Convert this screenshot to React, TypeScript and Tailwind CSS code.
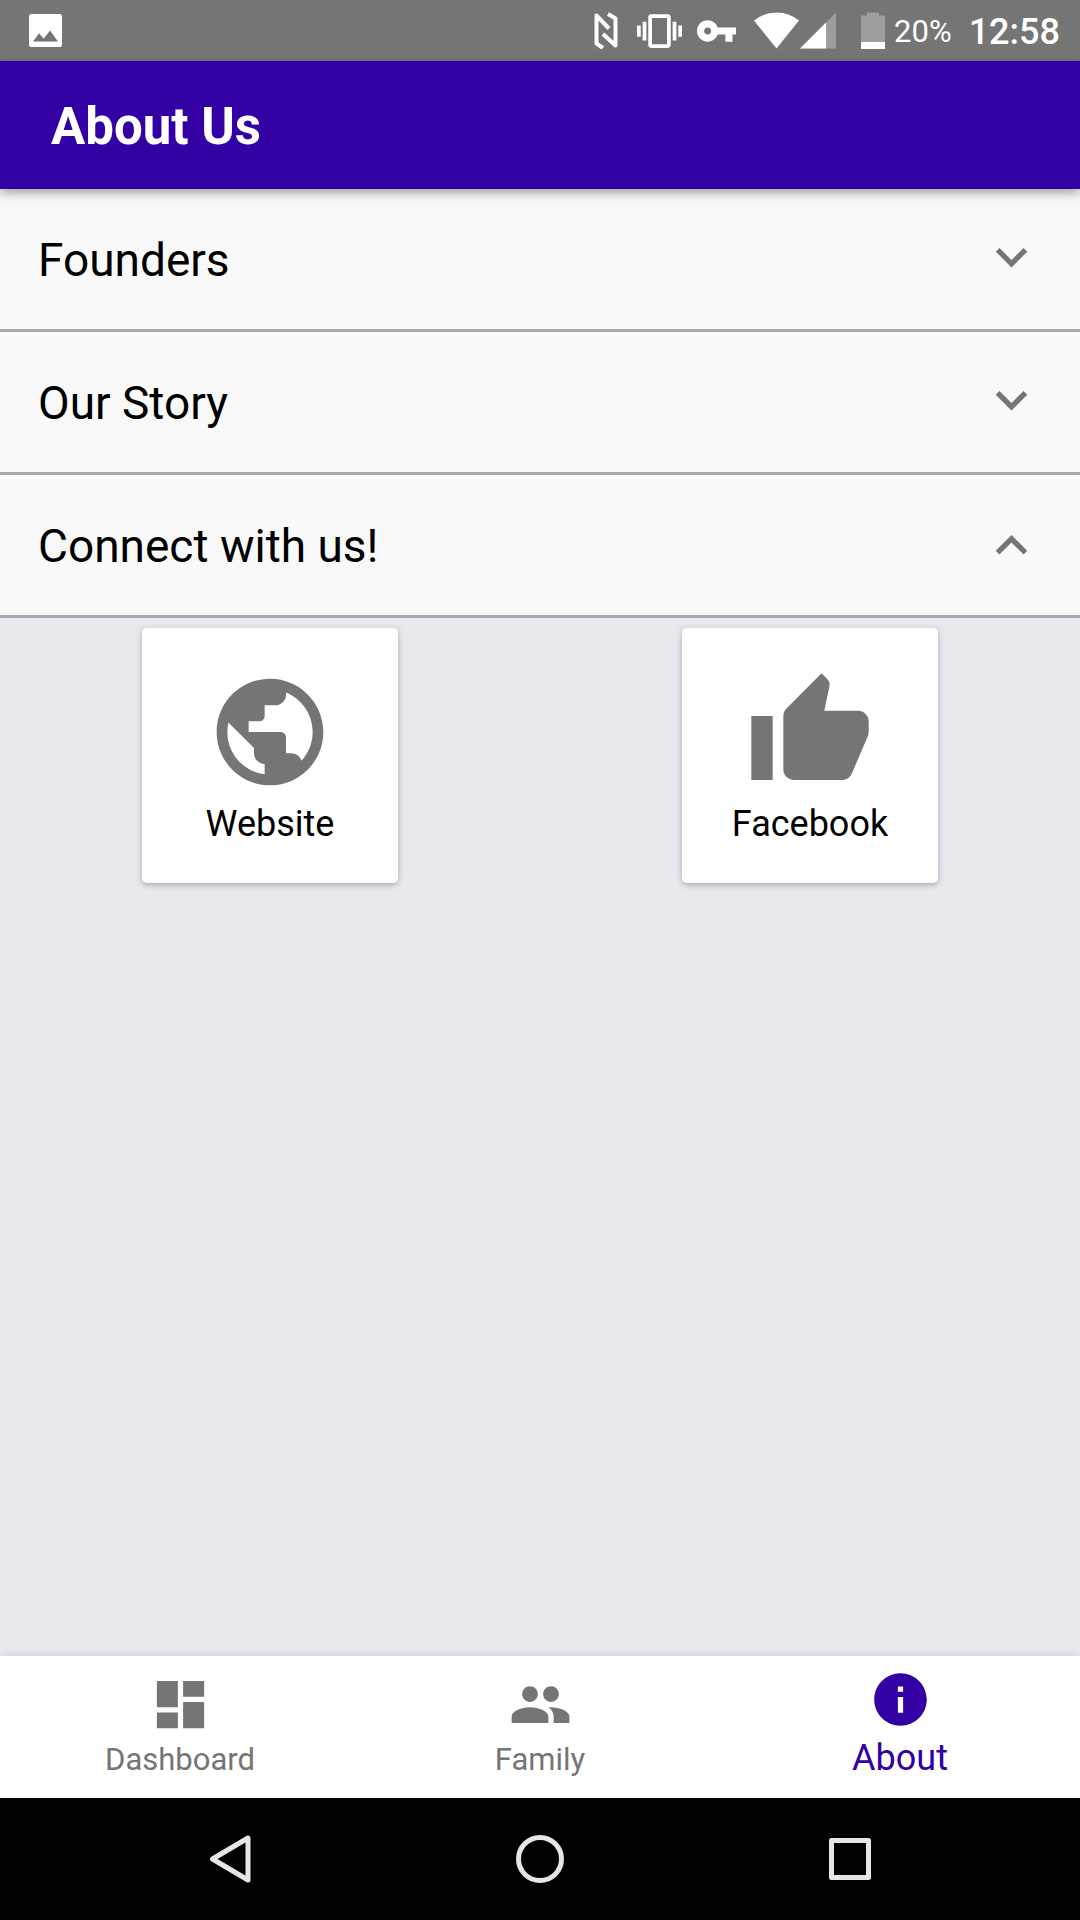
import { useState } from "react";
import type { ReactNode } from "react";

function StatusBar() {
  return (
    <div className="flex h-[61px] items-center justify-between bg-[#757575] pr-[20px] pl-[29px] text-white">
      <svg viewBox="0 0 18 18" className="size-[33px] fill-white" aria-label="Picture notification">
        <path
          fillRule="evenodd"
          d="M1.4 0h15.2Q18 0 18 1.4v15.2q0 1.4-1.4 1.4H1.4Q0 18 0 16.6V1.4Q0 0 1.4 0zM5.5 10.5L2.2 15h13.6L11.5 9 8 13.5z"
        />
      </svg>
      <div className="flex items-center">
        <svg
          viewBox="0 0 24 37"
          className="mr-[19px] h-[37px] w-[24px] fill-none stroke-white stroke-[4px]"
          strokeLinecap="butt"
          strokeLinejoin="round"
          aria-label="NFC"
        >
          <path d="M15 16.500L2.500 3.500v28L9 36M14 2l7.500 4.500v27L9 22" />
        </svg>
        <svg viewBox="0 3 24 18" className="mr-[15px] h-[34px] w-[45px] fill-white" aria-label="Vibrate">
          <path d="M0 15h2V9H0v6zm3 2h2V7H3v10zm19-8v6h2V9h-2zm-3 8h2V7h-2v10zM16.5 3h-9C6.67 3 6 3.67 6 4.5v15c0 .83.67 1.5 1.5 1.5h9c.83 0 1.5-.67 1.5-1.5v-15c0-.83-.67-1.5-1.5-1.5zM16 19H8V5h8v14z" />
        </svg>
        <svg viewBox="1 6 22 12" className="mr-[18px] h-[22px] w-[39px] fill-white" aria-label="VPN">
          <path d="M12.65 10C11.83 7.67 9.61 6 7 6c-3.31 0-6 2.69-6 6s2.69 6 6 6c2.61 0 4.83-1.67 5.65-4H17v4h4v-4h2v-4H12.65zM7 14c-1.1 0-2-.9-2-2s.9-2 2-2 2 .9 2 2-.9 2-2 2z" />
        </svg>
        <svg viewBox="0 0 45 37" className="mr-px h-[37px] w-[45px] fill-white" aria-label="Wi-Fi">
          <path d="M22.5 36.5L0 8.5Q10 .5 22.5 .5T45 8.5z" />
        </svg>
        <svg viewBox="0 0 36 37" className="mr-[25px] h-[37px] w-[36px] fill-white" aria-label="Signal">
          <path d="M36 .5v36H0z" fillOpacity=".3" />
          <path d="M26 10.5v26H0z" />
        </svg>
        <svg viewBox="0 0 24 37" className="mr-[9px] h-[37px] w-[24px] fill-white" aria-label="Battery">
          <path d="M6 .5h12v3h6v27H0v-27h6z" fillOpacity=".3" />
          <path d="M0 30h24v7H0z" />
        </svg>
        <span className="mr-[17px] pt-[2px] text-[31px] leading-[36px]">20%</span>
        <span className="pt-[3px] text-[36px] leading-[42px] font-medium">12:58</span>
      </div>
    </div>
  );
}

function SectionHeader({ title, open, onToggle }: { title: string; open: boolean; onToggle: () => void }) {
  return (
    <button
      type="button"
      aria-expanded={open}
      onClick={onToggle}
      className="flex h-[143px] w-full items-center justify-between border-b-[3px] border-[#a9a9a9] bg-[#f9f9f9] pr-[37px] pl-[38px] text-left text-[46px] leading-[54px] text-black"
    >
      <span className="pt-[2px]">{title}</span>
      <svg viewBox={open ? "0 0 24 24" : "0 1 24 24"} className="size-[63px] fill-[#757575]" aria-hidden="true">
        {open ? (
          <path d="M12 8l-6 6 1.41 1.41L12 10.83l4.59 4.58L18 14z" />
        ) : (
          <path d="M16.59 8.59L12 13.17 7.41 8.59 6 10l6 6 6-6z" />
        )}
      </svg>
    </button>
  );
}

function LinkCard({ label, href, path }: { label: string; href: string; path: string }) {
  return (
    <div className="flex flex-1 justify-center">
      <a
        href={href}
        className="flex h-[255px] w-[256px] flex-col items-center justify-center gap-[7px] rounded-[5px] bg-white pt-[2px] text-[36px] leading-[42px] text-black shadow-[0_2px_6px_rgba(0,0,0,0.28)]"
      >
        <svg viewBox="0 0 24 24" className="size-[128px] fill-[#757575]" aria-hidden="true">
          <path d={path} />
        </svg>
        <span>{label}</span>
      </a>
    </div>
  );
}

function Tab({ label, path, active = false }: { label: string; path: string; active?: boolean }) {
  return (
    <button
      type="button"
      aria-current={active ? "page" : undefined}
      className={
        active
          ? "flex flex-1 flex-col items-center justify-end gap-[6px] pb-[19px] text-[36px] leading-[42px] text-[#3300a3]"
          : "flex flex-1 flex-col items-center justify-end gap-[6px] pb-[20px] text-[31px] leading-[36px] text-[#757575]"
      }
    >
      <svg viewBox="0 0 24 24" className="size-[63px] fill-current" aria-hidden="true">
        <path d={path} />
      </svg>
      <span>{label}</span>
    </button>
  );
}

function SystemButton({ label, children }: { label: string; children: ReactNode }) {
  return (
    <button type="button" aria-label={label} className="flex flex-1 items-center justify-center">
      <svg
        viewBox="0 0 48 48"
        className="size-[48px] fill-none stroke-[#e6e6e6] stroke-[5px]"
        strokeLinejoin="round"
        aria-hidden="true"
      >
        {children}
      </svg>
    </button>
  );
}

const sections = ["Founders", "Our Story", "Connect with us!"];

export default function App() {
  const [openSection, setOpenSection] = useState("Connect with us!");

  return (
    <div className="flex min-h-screen flex-col bg-[#e9e8ee] font-['Roboto',sans-serif]">
      <StatusBar />
      <header className="relative z-10 flex h-[128px] items-center bg-[#3300a3] px-[51px] pt-[4px] shadow-[0_4px_10px_rgba(0,0,0,0.35)]">
        <h1 className="text-[51px] leading-[60px] font-bold text-white">About Us</h1>
      </header>

      <main className="flex-1">
        {sections.map((title) => (
          <SectionHeader
            key={title}
            title={title}
            open={openSection === title}
            onToggle={() => setOpenSection(openSection === title ? "" : title)}
          />
        ))}
        {openSection === "Connect with us!" && (
          <div className="flex pt-[10px]">
            <LinkCard
              label="Website"
              href="#website"
              path="M12 2C6.48 2 2 6.48 2 12s4.48 10 10 10 10-4.48 10-10S17.52 2 12 2zm-1 17.93c-3.95-.49-7-3.85-7-7.93 0-.62.08-1.21.21-1.79L9 15v1c0 1.1.9 2 2 2v1.93zm6.9-2.54c-.26-.81-1-1.39-1.9-1.39h-1v-3c0-.55-.45-1-1-1H8v-2h2c.55 0 1-.45 1-1V7h2c1.1 0 2-.9 2-2v-.41c2.93 1.19 5 4.06 5 7.41 0 2.08-.8 3.97-2.1 5.39z"
            />
            <LinkCard
              label="Facebook"
              href="#facebook"
              path="M1 21h4V9H1v12zm22-11c0-1.1-.9-2-2-2h-6.31l.95-4.57.03-.32c0-.41-.17-.79-.44-1.06L14.17 1 7.59 7.59C7.22 7.95 7 8.45 7 9v10c0 1.1.9 2 2 2h9c.83 0 1.54-.5 1.84-1.22l3.02-7.05c.09-.23.14-.47.14-.73v-2z"
            />
          </div>
        )}
      </main>

      <nav aria-label="Main" className="flex h-[142px] bg-white shadow-[0_-1px_8px_rgba(0,0,0,0.12)]">
        <Tab label="Dashboard" path="M3 13h8V3H3v10zm0 8h8v-6H3v6zm10 0h8V11h-8v10zm0-18v6h8V3h-8z" />
        <Tab
          label="Family"
          path="M16 11c1.66 0 2.99-1.34 2.99-3S17.66 5 16 5c-1.66 0-3 1.34-3 3s1.34 3 3 3zm-8 0c1.66 0 2.99-1.34 2.99-3S9.66 5 8 5C6.34 5 5 6.34 5 8s1.34 3 3 3zm0 2c-2.33 0-7 1.17-7 3.5V19h14v-2.5c0-2.33-4.67-3.5-7-3.5zm8 0c-.29 0-.62.02-.97.05 1.16.84 1.97 1.97 1.97 3.45V19h6v-2.5c0-2.33-4.67-3.5-7-3.5z"
        />
        <Tab
          active
          label="About"
          path="M12 2C6.48 2 2 6.48 2 12s4.48 10 10 10 10-4.48 10-10S17.52 2 12 2zm1 15h-2v-6h2v6zm0-8h-2V7h2v2z"
        />
      </nav>

      <div className="flex h-[122px] bg-black px-[75px]">
        <SystemButton label="Back">
          <path d="M6.5 24L42 3v42z" />
        </SystemButton>
        <SystemButton label="Home">
          <circle cx="24" cy="24" r="21.5" />
        </SystemButton>
        <SystemButton label="Recent apps">
          <path d="M5.5 5.5h37v37h-37z" />
        </SystemButton>
      </div>
    </div>
  );
}
